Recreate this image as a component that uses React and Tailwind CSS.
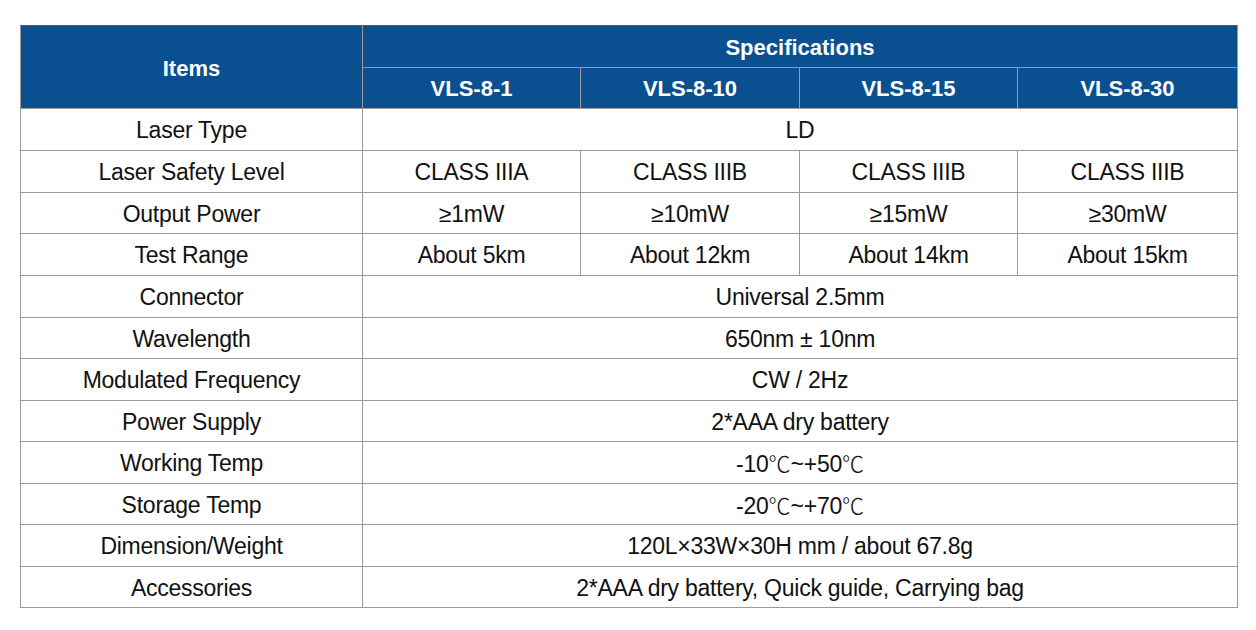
export default function App() {
  const models = ["VLS-8-1", "VLS-8-10", "VLS-8-15", "VLS-8-30"];
  const C = () => (
    <span className="font-extralight text-[22px] tracking-normal" style={{ fontFamily: '"Noto Sans CJK SC", sans-serif' }}>℃</span>
  );
  const rows = [
    ["Laser Type", "LD"],
    ["Laser Safety Level", ["CLASS IIIA", "CLASS IIIB", "CLASS IIIB", "CLASS IIIB"]],
    ["Output Power", ["≥1mW", "≥10mW", "≥15mW", "≥30mW"]],
    ["Test Range", ["About 5km", "About 12km", "About 14km", "About 15km"]],
    ["Connector", "Universal 2.5mm"],
    ["Wavelength", "650nm ± 10nm"],
    ["Modulated Frequency", "CW / 2Hz"],
    ["Power Supply", "2*AAA dry battery"],
    ["Working Temp", <>-10<C />~+50<C /></>],
    ["Storage Temp", <>-20<C />~+70<C /></>],
    ["Dimension/Weight", "120L×33W×30H mm / about 67.8g"],
    ["Accessories", "2*AAA dry battery, Quick guide, Carrying bag"],
  ];
  const heights = ["h-[42px]", "h-[42px]", "h-[41px]", "h-[42px]", "h-[42px]", "h-[41px]", "h-[42px]", "h-[41px]", "h-[42px]", "h-[41px]", "h-[42px]", "h-[41px]"];
  const cell = "border border-[#9a9a9a] text-center align-middle p-0";
  return (
    <div className="w-[1256px] h-[630px] bg-white pt-[25px] pl-[20px]" style={{ fontFamily: '"Liberation Sans", Arial, sans-serif' }}>
      <table className="table-fixed border-collapse w-[1217px] text-[23px] tracking-[-0.25px] leading-none text-[#111]">
        <colgroup>
          <col className="w-[342px]" />
          <col className="w-[218px]" />
          <col className="w-[219px]" />
          <col className="w-[218px]" />
          <col className="w-[220px]" />
        </colgroup>
        <thead>
          <tr className="h-[42px] bg-[#0a4f90] text-white font-bold text-[22px] tracking-normal">
            <th rowSpan={2} className={cell + " border-t-[#4a5a70] pt-[3px]"}>Items</th>
            <th colSpan={4} className={cell + " border-t-[#4a5a70] pt-[2px]"}>Specifications</th>
          </tr>
          <tr className="h-[41px] bg-[#0a4f90] text-white font-bold text-[22px] tracking-normal">
            {models.map((m) => (
              <th key={m} className={cell + " pt-[2px]"}>{m}</th>
            ))}
          </tr>
        </thead>
        <tbody>
          {rows.map(([label, val], i) => (
            <tr key={i} className={heights[i]}>
              <td className={cell + " pt-[2px]"}>{label}</td>
              {Array.isArray(val) ? (
                val.map((v, j) => (
                  <td key={j} className={cell + " pt-[2px]"}>{v}</td>
                ))
              ) : (
                <td colSpan={4} className={cell + " pt-[2px]"}>{val}</td>
              )}
            </tr>
          ))}
        </tbody>
      </table>
    </div>
  );
}
